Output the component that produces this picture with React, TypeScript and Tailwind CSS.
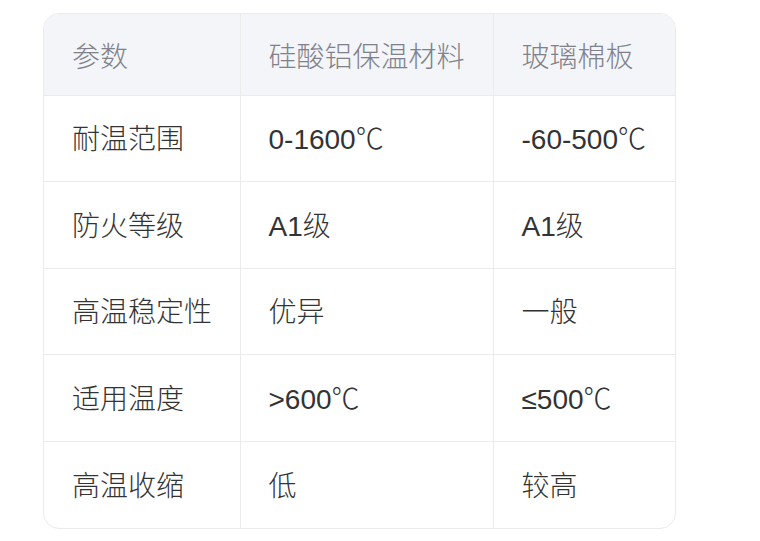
import React from 'react';

const rows: [string, string, string][] = [
  ['耐温范围', '0-1600℃', '-60-500℃'],
  ['防火等级', 'A1级', 'A1级'],
  ['高温稳定性', '优异', '一般'],
  ['适用温度', '>600℃', '≤500℃'],
  ['高温收缩', '低', '较高'],
];

const App: React.FC = () => {
  return (
    <div
      className="w-[760px] h-[541px] bg-white pl-[43px] pt-[13px]"
      style={{ fontFamily: '"Liberation Sans", "Noto Sans CJK SC", sans-serif' }}
    >
      <div className="w-[633px] border border-[#ebebeb] rounded-[16px] overflow-hidden">
        <table className="w-full border-collapse table-fixed text-[28px] font-light whitespace-nowrap">
          <colgroup>
            <col className="w-[196px]" />
            <col className="w-[253px]" />
            <col />
          </colgroup>
          <thead>
            <tr className="bg-[#f4f5f9] text-[#80818b]">
              <th className="text-left font-light pl-[28px] pt-[8px] h-[81px] leading-[40px]">参数</th>
              <th className="text-left font-light pl-[28px] pt-[8px] border-l border-[#ebebeb]">硅酸铝保温材料</th>
              <th className="text-left font-light pl-[28px] pt-[8px] border-l border-[#ebebeb]">玻璃棉板</th>
            </tr>
          </thead>
          <tbody className="text-[#333333]">
            {rows.map((r) => (
              <tr key={r[0]} className="border-t border-[#ebebeb]">
                <td className="pl-[28px] pt-[4px] h-[86.6px] leading-[40px]">{r[0]}</td>
                <td className="pl-[28px] pt-[4px] border-l border-[#ebebeb]">{r[1]}</td>
                <td className="pl-[28px] pt-[4px] border-l border-[#ebebeb]">{r[2]}</td>
              </tr>
            ))}
          </tbody>
        </table>
      </div>
    </div>
  );
};

export default App;
